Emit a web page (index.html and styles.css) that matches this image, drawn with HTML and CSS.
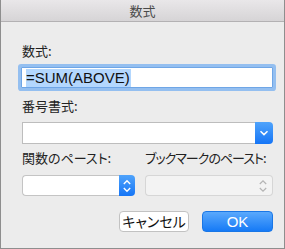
FILE: index.html
```html
<!DOCTYPE html>
<html lang="ja">

<head>
    <meta charset="UTF-8">
    <title>数式</title>
    <link rel="stylesheet" href="styles.css">
</head>

<body>
    <div class="dialog">
        <div class="dialog-title">数式</div>
        <div class="dialog-body">
            <label class="field-label">数式:</label>
            <div class="text-input"><span class="selected">=SUM(ABOVE)</span></div>

            <label class="field-label gap-lg">番号書式:</label>
            <div class="combo">
                <div class="combo-field"></div>
                <div class="combo-btn">
                    <svg width="10" height="6" viewBox="0 0 10 6"><path d="M1.5 1.2 L5 4.6 L8.5 1.2" fill="none" stroke="#fff" stroke-width="1.5"/></svg>
                </div>
            </div>

            <div class="paste-row">
                <div class="paste-col left">
                    <label class="field-label">関数のペースト:</label>
                    <div class="popup">
                        <div class="popup-field"></div>
                        <div class="popup-btn">
                            <svg width="10" height="14" viewBox="0 0 10 14"><path d="M1.8 5 L5 1.8 L8.2 5 M1.8 9 L5 12.2 L8.2 9" fill="none" stroke="#fff" stroke-width="1.4"/></svg>
                        </div>
                    </div>
                </div>
                <div class="paste-col right">
                    <label class="field-label tight">ブックマークのペースト:</label>
                    <div class="popup disabled">
                        <div class="popup-field"></div>
                        <div class="popup-btn">
                            <svg width="10" height="14" viewBox="0 0 10 14"><path d="M1.8 5 L5 1.8 L8.2 5 M1.8 9 L5 12.2 L8.2 9" fill="none" stroke="#b4b4b4" stroke-width="1.2"/></svg>
                        </div>
                    </div>
                </div>
            </div>

            <div class="dialog-buttons">
                <button class="btn cancel">キャンセル</button>
                <button class="btn ok">OK</button>
            </div>
        </div>
    </div>
</body>

</html>
```

FILE: styles.css
```css
* {
    box-sizing: border-box;
}

body {
    margin: 0;
    font-family: "Noto Sans CJK JP", "Liberation Sans", sans-serif;
}

.dialog {
    width: 285px;
    height: 249px;
    background: #ececec;
    border: 1px solid #8e8e8e;
    border-top: none;
}

.dialog-title {
    height: 22px;
    line-height: 21px;
    text-align: center;
    font-size: 13px;
    color: #4a4a4a;
    background: linear-gradient(#e9e7e9, #d6d4d6);
    border-bottom: 1px solid #b3b1b3;
}

.dialog-body {
    padding: 21px 11px 0 20px;
    display: flex;
    flex-direction: column;
}

.field-label {
    display: block;
    font-size: 13px;
    line-height: 16px;
    color: #222;
    padding-left: 1px;
    white-space: nowrap;
    font-feature-settings: "palt";
}

.field-label.tight {
    letter-spacing: -1px;
}

.gap-lg {
    margin-top: 10px;
}

.text-input {
    margin-top: 8px;
    height: 21px;
    background: #fff;
    border: 1px solid #6fa6e6;
    box-shadow: 0 0 0 3px #94bff0;
    border-radius: 1px;
    padding: 1px 0 0 4px;
    font-family: "Liberation Sans", sans-serif;
    font-size: 15px;
    line-height: 18px;
    color: #111;
}

.selected {
    background: #b3d7fe;
    display: inline-block;
    padding-right: 1px;
}

.combo {
    margin-top: 8px;
    margin-left: 1px;
    height: 22px;
    display: flex;
}

.combo-field {
    flex: 1;
    background: #fff;
    border: 1px solid #bdbdbd;
    border-right: none;
}

.combo-btn,
.popup-btn {
    display: flex;
    align-items: center;
    justify-content: center;
    background: linear-gradient(#4fa3fb, #1575f6);
    border-radius: 0 4px 4px 0;
}

.combo-btn {
    width: 18px;
}

.paste-row {
    margin-top: 6px;
    display: flex;
    gap: 9px;
}

.paste-col.left {
    width: 114px;
}

.paste-col.right {
    width: 129px;
}

.popup {
    margin-top: 9px;
    margin-left: 1px;
    height: 21px;
    display: flex;
}

.popup-field {
    flex: 1;
    background: #fff;
    border: 1px solid #c4c4c4;
    border-right: none;
    border-radius: 4px 0 0 4px;
}

.popup-btn {
    width: 16px;
}

.popup.disabled .popup-field {
    background: #f3f3f3;
    border-color: #d6d6d6;
}

.popup.disabled .popup-btn {
    background: #f3f3f3;
    border: 1px solid #d6d6d6;
    border-left: none;
    width: 20px;
}

.dialog-buttons {
    margin-top: 15px;
    display: flex;
    justify-content: flex-end;
    gap: 13px;
}

.btn {
    height: 21px;
    border-radius: 4px;
    font-family: "Noto Sans CJK JP", "Liberation Sans", sans-serif;
    font-size: 14px;
    line-height: 19px;
    padding: 0;
    font-feature-settings: "palt";
}

.btn.cancel {
    width: 70px;
    background: #fff;
    border: 1px solid #c2c2c2;
    color: #111;
}

.btn.ok {
    width: 71px;
    background: linear-gradient(#5aa9fc, #167af6);
    border: 1px solid #1a77e6;
    color: #fff;
    font-family: "Liberation Sans", sans-serif;
    font-size: 15px;
}
```
